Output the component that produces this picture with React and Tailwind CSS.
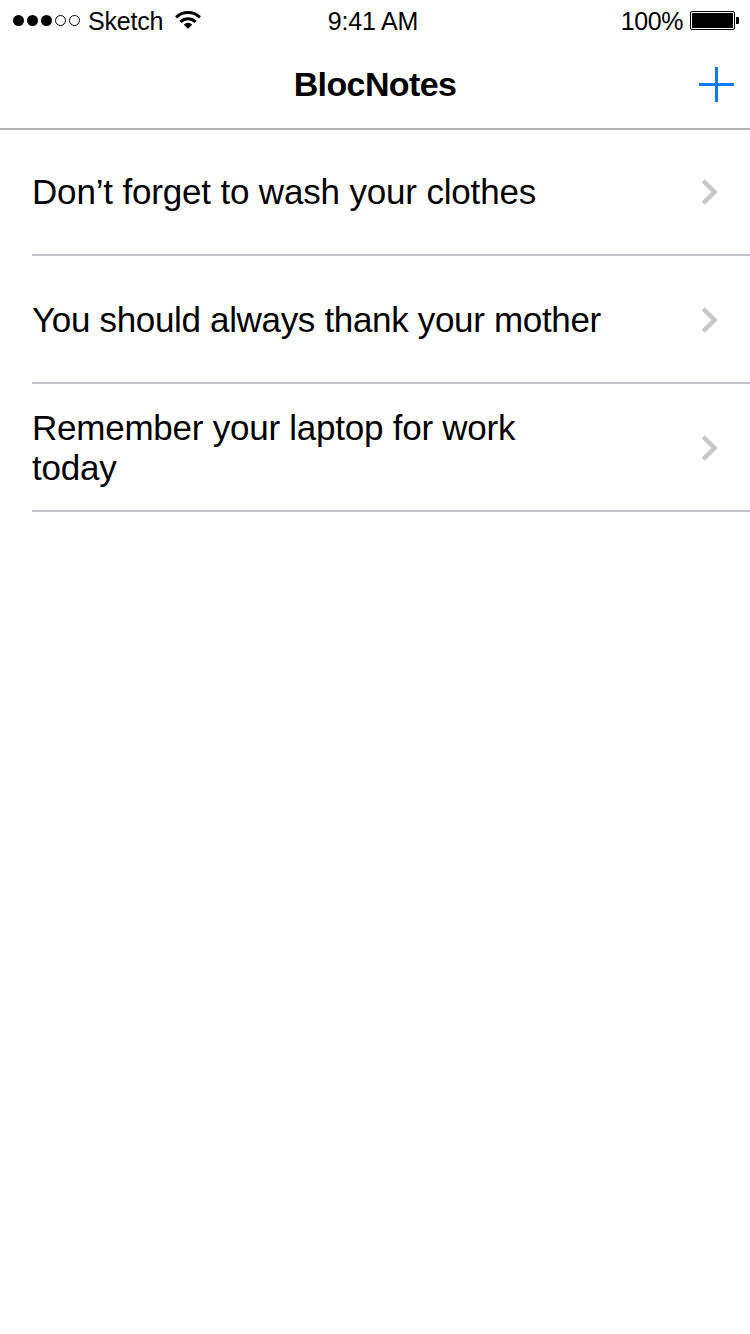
const notes = [
  { text: "Don’t forget to wash your clothes", cls: "tracking-[-0.17px]" },
  { text: "You should always thank your mother", cls: "tracking-[-0.33px]" },
  { text: "Remember your laptop for work today", cls: "tracking-[-0.24px]" },
];

function StatusBar() {
  return (
    <div className="grid h-10 grid-cols-3 items-center pt-0.5 text-[25px] leading-[38px]">
      <div className="flex items-center pl-3">
        <svg width="70" height="14" viewBox="0 0 70 14" className="block">
          <circle cx="6.5" cy="6.5" r="5.5" />
          <circle cx="20.5" cy="6.5" r="5.5" />
          <circle cx="34.5" cy="6.5" r="5.5" />
          <circle cx="48.5" cy="6.5" r="5" fill="none" stroke="#000" />
          <circle cx="62.5" cy="6.5" r="5" fill="none" stroke="#000" />
        </svg>
        <span className="ml-1.5 tracking-[-0.2px]">Sketch</span>
        <svg width="26" height="20" viewBox="0 0 26 20" className="ml-3 block">
          <g fill="none" stroke="#000" strokeWidth="3">
            <path d="M1.1 6.4a17 17 0 0 1 23.8 0" />
            <path d="M5.5 10.9a10.8 10.8 0 0 1 15 0" />
          </g>
          <path d="M13 17.8l-4.2-4.1a5.6 5.6 0 0 1 8.4 0z" />
        </svg>
      </div>
      <div className="pr-1 text-center tracking-[-0.2px]">9:41 AM</div>
      <div className="flex items-center justify-end pr-[11px]">
        <span className="tracking-[-0.45px]">100%</span>
        <svg width="49" height="20" viewBox="0 0 49 20" className="ml-[7px] block">
          <rect x=".5" y=".5" width="44" height="18" rx="1.5" fill="none" stroke="#000" />
          <rect x="2" y="2" width="41" height="15" rx=".5" />
          <path d="M46 6h2q1 0 1 1v5q0 1-1 1h-2z" />
        </svg>
      </div>
    </div>
  );
}

export default function App() {
  return (
    <div className="min-h-[1334px] w-[750px] bg-white font-['Liberation_Sans',Arial,sans-serif] text-black">
      <header className="h-[130px] border-b-2 border-[#b2b2b2]">
        <StatusBar />
        <div className="grid h-[88px] grid-cols-[1fr_auto_1fr] items-center">
          <h1 className="col-start-2 text-[34px] font-bold leading-10 tracking-[-0.6px]">BlocNotes</h1>
          <button className="mr-4 mt-px justify-self-end" aria-label="Add note">
            <svg width="35" height="35" viewBox="0 0 35 35" className="block">
              <path d="M17.5 0v35M0 17.5h35" stroke="#087bf5" strokeWidth="3" />
            </svg>
          </button>
        </div>
      </header>
      <ul className="pl-8">
        {notes.map((n) => (
          <li key={n.text} className="flex h-32 items-center justify-between border-b-2 border-[#c8c7cc] pr-8 pt-0.5 first:h-[126px] first:pt-0">
            <p className={"w-[572px] text-[35px] leading-10 " + n.cls}>{n.text}</p>
            <svg width="17" height="26" viewBox="0 0 17 26" className="block">
              <path d="M2.2 1.8l11.4 11.2L2.2 24.2" fill="none" stroke="#c7c7cc" strokeWidth="4.4" />
            </svg>
          </li>
        ))}
      </ul>
    </div>
  );
}
